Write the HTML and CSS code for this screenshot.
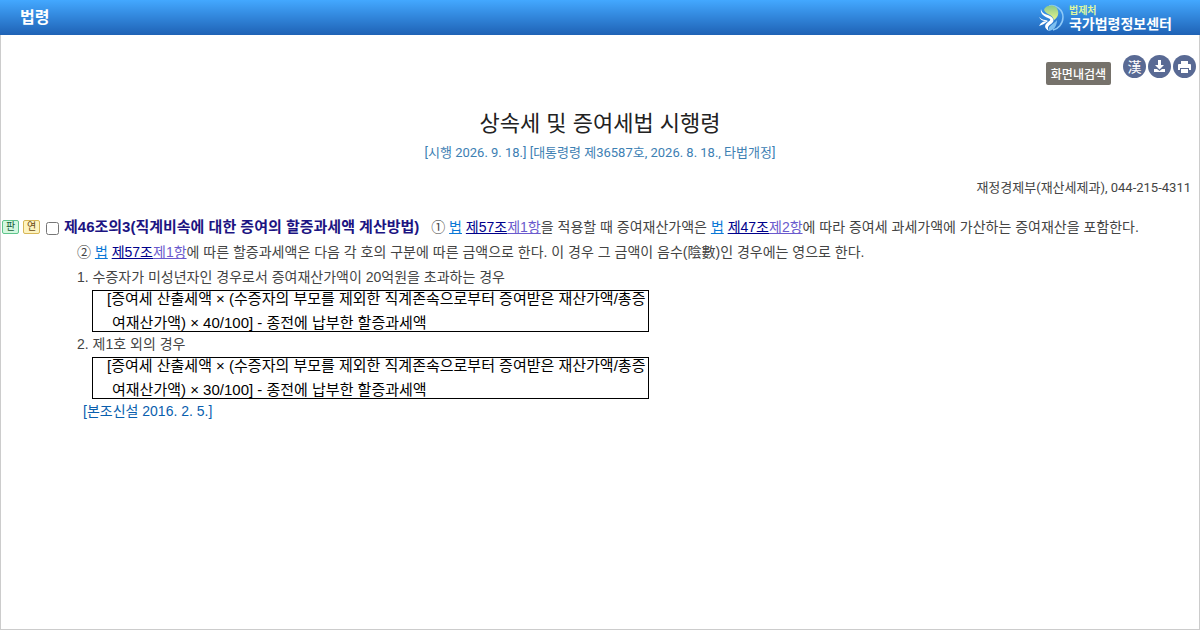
FILE: index.html
```html
<!DOCTYPE html>
<html lang="ko">
<head>
  <meta charset="UTF-8" />
  <title>상속세 및 증여세법 시행령</title>
  <link rel="stylesheet" href="styles.css">
</head>
<body>

  <header class="top">
    <h1>법령</h1>
    <a href="#" class="logo">
      <svg width="28" height="28" viewBox="0 0 28 28">
        <defs>
          <linearGradient id="leaf" x1="0" y1="0" x2="0" y2="1">
            <stop offset="0" stop-color="#8cc98a" />
            <stop offset="1" stop-color="#e6f58c" />
          </linearGradient>
        </defs>
        <path d="M12 2C19 0 26 6 26 13c0 7-5 12-10 13" fill="none" stroke="#8fcaf8" stroke-width="1.500" />
        <path d="M8 4c4-4 12-3 13 3 1 4-1 7-4 9-1-3-3-5-6-6-3-2-5-4-3-6z" fill="url(#leaf)" />
        <path d="M4 5c1 5 5 5 9 7 5 3 4 6 1 8-3 2-4 4-2 7-5-3-5-6-1-9 3-2 3-3 0-4C6 12 3 9 4 5z" fill="#fff" />
        <path d="M2 13c3 3 6 3 9 3-3 2-7 1-9-3zM2 22c2-4 5-5 9-5-3 2-5 4-9 5z" fill="#fff" />
        <path d="M12 27c-2-5 5-7 8-11 0 6-3 10-8 11z" fill="#7fc0f0" />
      </svg>
      <span class="logo-text">
        <small>법제처</small>
        <strong>국가법령정보센터</strong>
      </span>
    </a>
  </header>

  <main>
    <!-- 도구 버튼 -->
    <div class="tools">
      <button class="search">화면내검색</button>
      <div class="icons">
        <button class="round">漢</button>
        <button class="round" aria-label="저장">
          <svg width="23" height="23" viewBox="0 0 23 23">
            <path d="M10 5h3v5h3l-4.500 4.500L7 10h3z" fill="#fff" />
            <path d="M6 14v3h11v-3h-3l-2.500 2L9 14z" fill="#fff" />
          </svg>
        </button>
        <button class="round" aria-label="인쇄">
          <svg width="23" height="23" viewBox="0 0 23 23">
            <path d="M8 6h7v3H8z" fill="#fff" />
            <path d="M6 9h11q1 0 1 1v5h-2v-2H7v2H5v-5q0-1 1-1z" fill="#fff" />
            <path d="M8 14h7v4H8z" fill="#fff" />
          </svg>
        </button>
      </div>
    </div>

    <h2>상속세 및 증여세법 시행령</h2>
    <p class="info">[시행 2026. 9. 18.] [대통령령 제36587호, 2026. 8. 18., 타법개정]</p>
    <p class="dept">재정경제부(재산세제과), 044-215-4311</p>

    <!-- 조문 -->
    <article>
      <div class="row">
        <a href="#" class="badge green">판</a>
        <a href="#" class="badge yellow">연</a>
        <input type="checkbox" id="jo46">
        <p><label for="jo46">제46조의3(직계비속에 대한 증여의 할증과세액 계산방법)</label> ① <a href="#" class="law">법</a> <a href="#" class="jo">제57조</a><a href="#" class="hang">제1항</a>을 적용할 때 증여재산가액은 <a href="#" class="law">법</a> <a href="#" class="jo">제47조</a><a href="#" class="hang">제2항</a>에 따라 증여세 과세가액에 가산하는 증여재산을 포함한다.</p>
      </div>
      <p class="para">② <a href="#" class="law">법</a> <a href="#" class="jo">제57조</a><a href="#" class="hang">제1항</a>에 따른 할증과세액은 다음 각 호의 구분에 따른 금액으로 한다. 이 경우 그 금액이 음수(陰數)인 경우에는 영으로 한다.</p>
      <p class="para">1. 수증자가 미성년자인 경우로서 증여재산가액이 20억원을 초과하는 경우</p>
      <div class="formula">
        <p>[증여세 산출세액 × (수증자의 부모를 제외한 직계존속으로부터 증여받은 재산가액/총증</p>
        <p>여재산가액) × 40/100] - 종전에 납부한 할증과세액</p>
      </div>
      <p class="para">2. 제1호 외의 경우</p>
      <div class="formula">
        <p>[증여세 산출세액 × (수증자의 부모를 제외한 직계존속으로부터 증여받은 재산가액/총증</p>
        <p>여재산가액) × 30/100] - 종전에 납부한 할증과세액</p>
      </div>
      <p class="note">[본조신설 2016. 2. 5.]</p>
    </article>
  </main>

</body>
</html>
```

FILE: styles.css
```css
* {
  box-sizing: border-box;
}

body {
  display: flex;
  flex-direction: column;
  min-height: 100vh;
  margin: 0;
  background: #fff;
  color: #444;
  font-family: "Liberation Sans", "Noto Sans CJK KR", sans-serif;
  font-size: 14px;
  line-height: 25px;
}

h1, h2, p {
  margin: 0;
}

button {
  border: none;
  padding: 0;
  color: #fff;
  font-family: "Noto Sans CJK KR", sans-serif;
  cursor: pointer;
}

/* 상단 */
.top {
  display: flex;
  justify-content: space-between;
  align-items: center;
  height: 35px;
  padding: 0 28px 0 20px;
  background: linear-gradient(#43a8ff, #1f62b5);
  color: #fff;
}
.top h1 {
  font-size: 16px;
}
.logo {
  display: flex;
  align-items: center;
  gap: 4px;
  color: #fff;
  text-decoration: none;
}
.logo-text {
  display: flex;
  flex-direction: column;
  padding-top: 2px;
}
.logo-text small {
  color: #dcf5a0;
  font-size: 10px;
  font-weight: bold;
  line-height: 11px;
}
.logo-text strong {
  font-size: 14px;
  line-height: 16px;
}

main {
  flex: 1;
  border: 1px solid #ccc;
  border-top: none;
}

.tools {
  display: flex;
  justify-content: flex-end;
  gap: 12px;
  padding: 20px 3px 0 0;
}
.search {
  height: 23px;
  margin-top: 7px;
  padding: 0 5px;
  border-radius: 2px;
  background: #76726b;
  font-size: 12px;
  font-weight: 500;
  line-height: 20px;
}
.icons {
  display: flex;
  gap: 2px;
}
.round {
  width: 23px;
  height: 23px;
  border-radius: 50%;
  background: #596a94;
  font-size: 14px;
  line-height: 23px;
}
.round svg {
  display: block;
}

h2 {
  margin-top: 23px;
  color: #222;
  font-size: 22px;
  font-weight: 400;
  line-height: 32px;
  text-align: center;
}
.info, .dept {
  font-family: Roboto, "Noto Sans CJK KR", sans-serif;
  font-size: 13px;
}
.info {
  color: #3d80b3;
  text-align: center;
}
.dept {
  margin-top: 10px;
  padding-right: 8px;
  text-align: right;
}

article {
  margin-top: 14px;
}
.row {
  display: flex;
  align-items: flex-start;
  padding-left: 1px;
}
.badge {
  width: 17px;
  height: 14px;
  margin: 6px 4px 0 0;
  border: 1px solid;
  border-radius: 2px;
  font-size: 10px;
  line-height: 12px;
  text-align: center;
  text-decoration: none;
}
.green {
  border-color: #5fc48c;
  background: #d3f8df;
  color: #17603a;
}
.yellow {
  border-color: #d8b758;
  background: #fdf3c0;
  color: #6b4a10;
}
.row input {
  width: 13px;
  height: 13px;
  margin: 8px 5px 0 2px;
}
.row label {
  padding-right: 8px;
  color: #1c1482;
  font-size: 15px;
  font-weight: bold;
}
.law {
  color: #0a78d6;
}
.jo {
  color: #00008b;
}
.hang {
  color: #6a5acd;
}
.para {
  padding-left: 76px;
}

/* 계산식 */
.formula {
  display: flex;
  flex-direction: column;
  gap: 8px;
  width: fit-content;
  margin-left: 91px;
  padding: 0 3px 0 14px;
  border: 1px solid #000;
  color: #000;
  font-size: 15px;
  line-height: 16px;
}
.formula p + p {
  padding-left: 5px;
}
.note {
  padding-left: 82px;
  color: #0a5fae;
}
```
